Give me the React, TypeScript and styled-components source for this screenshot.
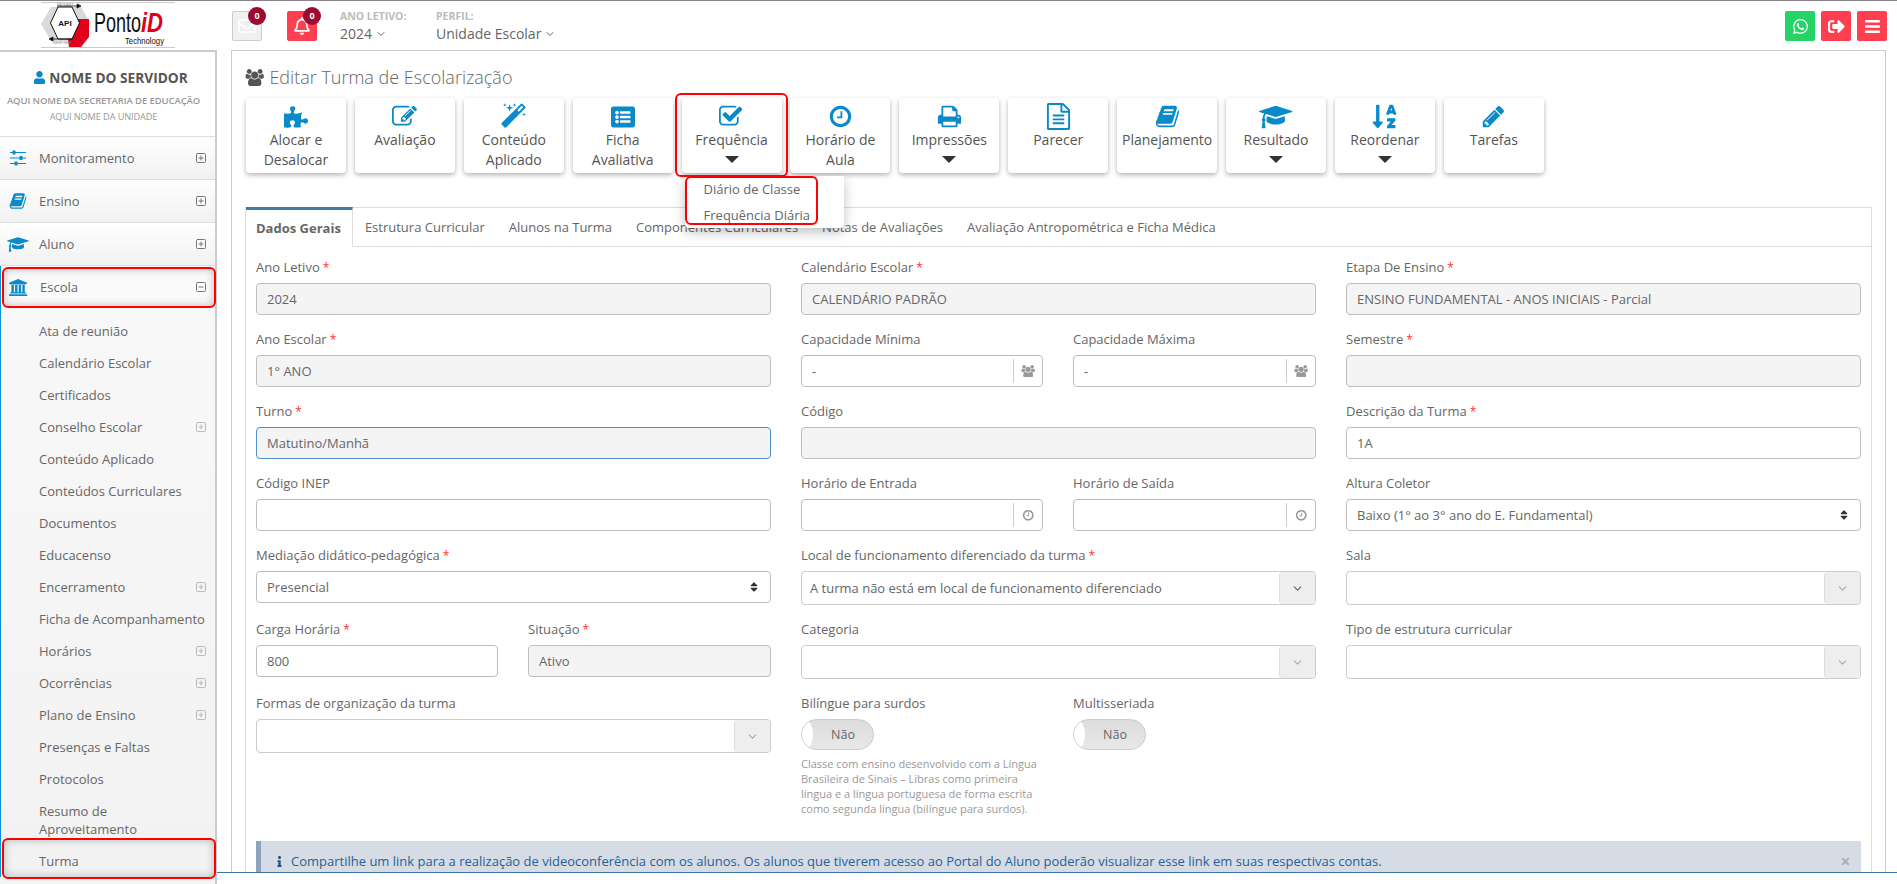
import React from "react";
import styled, { createGlobalStyle } from "styled-components";
import { FaBars, FaInfo, FaListAlt, FaPuzzlePiece, FaRegBell, FaRegEnvelope, FaSignOutAlt, FaSort, FaSortAlphaDown, FaTimes, FaUser, FaWhatsapp } from "react-icons/fa";
import { FiChevronDown } from "react-icons/fi";
import { LuSquareMinus, LuSquarePlus } from "react-icons/lu";

const GlobalStyle = createGlobalStyle`
  html, body {
    margin: 0;
    height: 884px;
    overflow: hidden;
    background: #fff;
    font-family: "Open Sans", "Liberation Sans", sans-serif;
    font-size: 13px;
    color: #666;
  }
  * { box-sizing: border-box; }
`;

const Page = styled.div`
  height: 884px;
  overflow: hidden;
  display: flex;
  flex-direction: column;
  border-top: 1px solid #8a8289;
`;

/* top bar */
const TopBar = styled.header`
  height: 49px;
  flex: none;
  display: flex;
  align-items: flex-start;
  padding: 1px 10px 0 41px;
`;

const LogoBox = styled.div`
  width: 134px;
  height: 46px;
  margin-right: 57px;
  border-top: 1px solid #ccc;
  border-bottom: 1px solid #ccc;
`;

const NoticeButton = styled.div<{ $alert?: boolean }>`
  position: relative;
  width: 30px;
  height: 30px;
  margin: 9px 25px 0 0;
  display: flex;
  align-items: center;
  justify-content: center;
  border-radius: 2px;
  border: 1px solid ${(p) => (p.$alert ? "#ff3f50" : "#ccc")};
  background: ${(p) => (p.$alert ? "#ff3f50" : "#f0f0f0")};
  color: #fff;
  font-size: 18px;
`;

const Badge = styled.span`
  position: absolute;
  top: -5px;
  left: 15px;
  width: 18px;
  height: 18px;
  border-radius: 50%;
  background: #9c0b2f;
  color: #fff;
  font-size: 9px;
  font-weight: 700;
  line-height: 18px;
  text-align: center;
`;

const PeriodGroup = styled.div`
  display: flex;
  margin: 7px 0 0 -2px;
`;

const Period = styled.div<{ $width: number }>`
  width: ${(p) => p.$width}px;
`;

const PeriodLabel = styled.div`
  font-size: 10.5px;
  font-weight: 700;
  line-height: 14px;
  color: #bbb;
`;

const PeriodValue = styled.div`
  display: flex;
  align-items: center;
  gap: 3px;
  font-size: 14px;
  line-height: 22px;
  color: #666;
`;

const ShortcutGroup = styled.div`
  margin: 9px 0 0 auto;
  display: flex;
  gap: 6px;
`;

const Shortcut = styled.div<{ $color: string }>`
  width: 30px;
  height: 30px;
  border-radius: 2px;
  background: ${(p) => p.$color};
  color: #fff;
  font-size: 17px;
  display: flex;
  align-items: center;
  justify-content: center;
`;

const Body = styled.div`
  flex: 1;
  min-height: 0;
  display: flex;
`;

/* sidebar */
const Sidebar = styled.aside`
  width: 217px;
  flex: none;
  border-top: 2px solid #ccc;
  border-right: 2px solid #ccc;
  background: #f5f5f5;
`;

const Profile = styled.div`
  height: 85px;
  background: #fff;
  border-bottom: 1px solid #ddd;
  padding: 16px 8px 0 0;
  text-align: center;
`;

const ProfileName = styled.div`
  margin-left: 14px;
  font-size: 13.7px;
  font-weight: 700;
  line-height: 20px;
  color: #555;
  white-space: nowrap;
  svg { color: #0a8ac8; font-size: 13px; margin-right: 3px; vertical-align: -1px; }
`;

const ProfileLine = styled.div<{ $bold?: boolean }>`
  font-size: ${(p) => (p.$bold ? 9.5 : 9.2)}px;
  font-weight: ${(p) => (p.$bold ? 600 : 400)};
  line-height: 16px;
  margin-top: ${(p) => (p.$bold ? 5 : 0)}px;
  letter-spacing: -0.1px;
  color: #999;
  white-space: nowrap;
`;

const MenuRow = styled.div<{ $open?: boolean }>`
  position: relative;
  height: ${(p) => (p.$open ? 42 : 43)}px;
  display: flex;
  align-items: center;
  background: ${(p) => (p.$open ? "#fafafa" : "linear-gradient(#fff, #f1f1f1)")};
  border-bottom: ${(p) => (p.$open ? "none" : "1px solid #ddd")};
  color: #666;
  ${(p) =>
    p.$open &&
    `&::after {
      content: "";
      position: absolute;
      inset: 1px -1px 0 1px;
      border: 2px solid #f00;
      border-radius: 6px;
      box-shadow: inset 0 0 8px rgba(0, 0, 0, 0.25);
    }`}
`;

const MenuIcon = styled.span<{ $size?: number }>`
  width: 36px;
  margin-right: 3px;
  display: flex;
  justify-content: center;
  color: #0a8ac8;
  font-size: ${(p) => p.$size ?? 18}px;
`;

const MenuLabel = styled.span`
  flex: 1;
`;

const ExpandIcon = styled.span<{ $soft?: boolean }>`
  width: 12px;
  margin-right: 8px;
  display: flex;
  color: ${(p) => (p.$soft ? "#bbb" : "#777")};
  font-size: 12px;
`;

const OpenGroup = styled.div`
  border-left: 1px solid #0a8fd0;
`;

const SubList = styled.div`
  padding-top: 7px;
  background: linear-gradient(#f8f8f8, #f2f2f2);
`;

const SubItem = styled.div<{ $marked?: boolean }>`
  position: relative;
  display: flex;
  align-items: center;
  padding: 7px 0 7px 38px;
  line-height: 18px;
  color: #666;
  ${(p) =>
    p.$marked &&
    `&::after {
      content: "";
      position: absolute;
      inset: -7px -1px -2px 1px;
      border: 2px solid #f00;
      border-radius: 6px;
      box-shadow: inset 0 0 8px rgba(0, 0, 0, 0.25);
    }`}
`;

const SubLabel = styled.span`
  flex: 1;
`;

/* main panel */
const Main = styled.main`
  width: 1655px;
  height: 823px;
  margin-left: 14px;
  overflow: hidden;
  flex: none;
  border: 1px solid #ccc;
  border-bottom: none;
  padding: 14px 13px 0;
`;

const PageTitle = styled.h1`
  margin: 0;
  display: flex;
  align-items: center;
  gap: 5px;
  font-size: 18px;
  font-weight: 300;
  line-height: 24px;
  color: #666;
  svg { color: #555; font-size: 17px; }
`;

const ActionBar = styled.div`
  display: flex;
  gap: 8.9px;
  margin: 9px 0 0 1px;
`;

const ActionButton = styled.div<{ $marked?: boolean }>`
  position: relative;
  width: 100px;
  height: 75px;
  flex: none;
  padding-top: 5px;
  border-radius: 4px;
  background: #fff;
  box-shadow: 0 2px 5px rgba(0, 0, 0, 0.3);
  text-align: center;
  font-size: 14px;
  line-height: 20px;
  color: #555;
  ${(p) => p.$marked && "z-index: 3;"}
  ${(p) =>
    p.$marked &&
    `&::after {
      content: "";
      position: absolute;
      inset: -5px -6px -4px -7px;
      border: 2px solid #f00;
      border-radius: 6px;
      pointer-events: none;
    }`}
`;

const ActionIcon = styled.div<{ $size?: number }>`
  height: 27px;
  display: flex;
  align-items: center;
  justify-content: center;
  color: #0a8ac8;
  font-size: ${(p) => p.$size ?? 25}px;
`;

const Caret = styled.div`
  width: 0;
  height: 0;
  margin: 6px auto 0;
  border-left: 7.5px solid transparent;
  border-right: 7.5px solid transparent;
  border-top: 7.5px solid #333;
`;

const Dropdown = styled.div`
  position: absolute;
  top: 78px;
  left: 3px;
  width: 159px;
  height: 52px;
  background: #fff;
  border-radius: 0 0 4px 4px;
  box-shadow: 0 4px 12px rgba(0, 0, 0, 0.25);
  text-align: left;
`;

const DropdownMark = styled.div`
  width: 133px;
  height: 49px;
  border: 2px solid #f00;
  border-radius: 6px;
  padding: 0 0 0 17px;
`;

const DropdownItem = styled.div`
  height: 26px;
  font-size: 13px;
  line-height: 23px;
  color: #666;
  white-space: nowrap;
`;

const TabBox = styled.section`
  margin-top: 34px;
  border-left: 1px solid #ddd;
  border-right: 1px solid #ddd;
  width: 1627px;
`;

const TabBar = styled.div`
  height: 40px;
  display: flex;
`;

const Tab = styled.div<{ $active?: boolean }>`
  padding: 0 ${(p) => (p.$active ? "11px 0 10px" : "12px")};
  line-height: ${(p) => (p.$active ? 37 : 39)}px;
  white-space: nowrap;
  color: #666;
  font-weight: ${(p) => (p.$active ? 700 : 400)};
  border-top: ${(p) => (p.$active ? "3px solid #3f7fa6" : "1px solid #ddd")};
  border-bottom: ${(p) => (p.$active ? "none" : "1px solid #ddd")};
  border-right: ${(p) => (p.$active ? "1px solid #ddd" : "none")};
`;

const TabFiller = styled.div`
  flex: 1;
  border-top: 1px solid #ddd;
  border-bottom: 1px solid #ddd;
`;

const TabContent = styled.div`
  padding: 9px 10px 0;
`;

const FormGrid = styled.div`
  display: grid;
  grid-template-columns: repeat(3, 515px);
  column-gap: 30px;
  align-items: start;
`;

const SplitCell = styled.div`
  display: grid;
  grid-template-columns: 242px 243px;
  column-gap: 30px;
  align-items: start;
`;

const Field = styled.div`
  margin-bottom: 13px;
`;

const Label = styled.div`
  height: 27px;
  padding-bottom: 5px;
  font-size: 13px;
  line-height: 22px;
  color: #666;
  white-space: nowrap;
`;

const Star = styled.span`
  margin-left: 3px;
  font-size: 12px;
  color: #f33;
`;

const TextBox = styled.div<{ $disabled?: boolean; $focus?: boolean }>`
  height: 32px;
  padding: 0 10px;
  display: flex;
  align-items: center;
  border: 1px solid ${(p) => (p.$focus ? "#4d90cf" : "#bdbdbd")};
  border-radius: 4px;
  background: ${(p) => (p.$disabled ? "#f4f4f4" : "#fff")};
  color: #666;
  white-space: nowrap;
`;

const AddonBox = styled(TextBox)`
  padding: 0 0 0 10px;
`;

const Addon = styled.div`
  margin-left: auto;
  width: 29px;
  height: 24px;
  padding-left: 1px;
  display: flex;
  align-items: center;
  justify-content: center;
  border-left: 1px solid #ccc;
  color: #999;
  font-size: 12.5px;
`;

const NativeSelect = styled(TextBox)`
  justify-content: space-between;
  svg { color: #333; font-size: 12px; }
`;

const SearchSelect = styled.div`
  height: 34px;
  padding-left: 8px;
  display: flex;
  align-items: center;
  border: 1px solid #ccc;
  border-radius: 4px;
  color: #666;
  white-space: nowrap;
`;

const SelectArrow = styled.div<{ $filled?: boolean }>`
  margin-left: auto;
  width: 36px;
  height: 32px;
  display: flex;
  align-items: center;
  justify-content: center;
  border-left: 1px solid #ddd;
  border-radius: 4px;
  background: #eee;
  color: ${(p) => (p.$filled ? "#666" : "#aaa")};
  font-size: 13px;
`;

const Toggle = styled.div`
  position: relative;
  width: 73px;
  height: 31px;
  padding-left: 11px;
  display: flex;
  align-items: center;
  justify-content: center;
  overflow: hidden;
  border: 1px solid #ccc;
  border-radius: 16px;
  background: linear-gradient(#dcdcdc, #e8e8e8);
  color: #666;
  font-size: 12.5px;
  &::before {
    content: "";
    position: absolute;
    top: 0;
    bottom: 0;
    left: -4px;
    width: 15px;
    border-radius: 50%;
    background: #fff;
  }
`;

const HelpText = styled.div`
  margin-top: 6px;
  font-size: 11px;
  line-height: 15px;
  color: #999;
`;

const Alert = styled.div`
  margin-top: 12px;
  width: 1605px;
  height: 44px;
  padding: 8px 0 0 5px;
  display: flex;
  align-items: flex-start;
  border-left: 5px solid #8fa3bd;
  background: #d5dce6;
  color: #2b5f92;
  line-height: 24px;
  white-space: nowrap;
`;

const AlertIcon = styled.span`
  width: 25px;
  padding: 2px 0 0 8px;
  font-size: 11px;
  color: #2b4f75;
`;

const AlertClose = styled.span`
  margin-left: auto;
  margin-right: 10px;
  padding-top: 2px;
  font-size: 11px;
  color: #a8b0ba;
`;

const Footer = styled.footer`
  position: fixed;
  top: 872px;
  left: 217px;
  right: 0;
  height: 12px;
  background: #fff;
  border-top: 1px solid #3a73a8;
`;

// Font Awesome 4 outlines, the react-icons set only carries the redrawn 5 versions
const FaOld = ({ d, width = 1792 }: { d: string; width?: number }) => (
  <svg viewBox={`0 0 ${width} 1792`} width={`${width / 1792}em`} height="1em" fill="currentColor">
    <path d={d} />
  </svg>
);

const CHECK_SQUARE = "M1408 930v318q0 119-84.5 203.5t-203.5 84.5h-832q-119 0-203.5-84.5t-84.5-203.5v-832q0-119 84.5-203.5t203.5-84.5h832q63 0 117 25 15 7 18 23 3 17-9 29l-49 49q-10 10-23 10-3 0-9-2-23-6-45-6h-832q-66 0-113 47t-47 113v832q0 66 47 113t113 47h832q66 0 113-47t47-113v-254q0-13 9-22l64-64q10-10 23-10 6 0 12 3 20 8 20 29zm231-489l-814 814q-24 24-57 24t-57-24l-430-430q-24-24-24-57t24-57l110-110q24-24 57-24t57 24l263 263 647-647q24-24 57-24t57 24l110 110q24 24 24 57t-24 57z";
const PENCIL_SQUARE = "M888 1184l116-116-152-152-116 116v56h96v96h56zm440-720q-16-16-33 1l-350 350q-17 17-1 33t33-1l350-350q17-17 1-33zm80 594v190q0 119-84.5 203.5t-203.5 84.5h-832q-119 0-203.5-84.5t-84.5-203.5v-832q0-119 84.5-203.5t203.5-84.5h832q63 0 117 25 15 7 18 23 3 17-9 29l-49 49q-14 14-32 8-23-6-45-6h-832q-66 0-113 47t-47 113v832q0 66 47 113t113 47h832q66 0 113-47t47-113v-126q0-13 9-22l64-64q15-15 35-7t20 29zm-96-738l288 288-672 672h-288v-288zm444 132l-92 92-288-288 92-92q28-28 68-28t68 28l152 152q28 28 28 68t-28 68z";
const FILE_TEXT = "M1596 380q28 28 48 76t20 88v1152q0 40-28 68t-68 28h-1344q-40 0-68-28t-28-68v-1600q0-40 28-68t68-28h896q40 0 88 20t76 48zm-444-244v376h376q-10-29-22-41l-313-313q-12-12-41-22zm384 1528v-1024h-416q-40 0-68-28t-28-68v-416h-768v1536h1280zm-1024-864q0-14 9-23t23-9h704q14 0 23 9t9 23v64q0 14-9 23t-23 9h-704q-14 0-23-9t-9-23v-64zm736 224q14 0 23 9t9 23v64q0 14-9 23t-23 9h-704q-14 0-23-9t-9-23v-64q0-14 9-23t23-9h704zm0 256q14 0 23 9t9 23v64q0 14-9 23t-23 9h-704q-14 0-23-9t-9-23v-64q0-14 9-23t23-9h704z";
const CLOCK = "M1024 544v448q0 14-9 23t-23 9h-320q-14 0-23-9t-9-23v-64q0-14 9-23t23-9h224v-352q0-14 9-23t23-9h64q14 0 23 9t9 23zm416 352q0-148-73-273t-198-198-273-73-273 73-198 198-73 273 73 273 198 198 273 73 273-73 198-198 73-273zm224 0q0 209-103 385.5t-279.5 279.5-385.5 103-385.5-103-279.5-279.5-103-385.5 103-385.5 279.5-279.5 385.5-103 385.5 103 279.5 279.5 103 385.5z";
const USERS = "M657 896q-162 5-265 128h-134q-82 0-138-40.500t-56-118.500q0-353 124-353 6 0 43.500 21t97.500 42.500 119 21.500q67 0 133-23-5 37-5 66 0 139 81 256zm1071 637q0 120-73 189.500t-194 69.500h-874q-121 0-194-69.500t-73-189.500q0-53 3.500-103.500t14-109 26.500-108.500 43-97.500 62-81 85.500-53.500 111.500-20q10 0 43 21.500t73 48 107 48 135 21.500 135-21.500 107-48 73-48 43-21.500q61 0 111.500 20t85.500 53.500 62 81 43 97.500 26.500 108.500 14 109 3.500 103.500zm-1024-1277q0 106-75 181t-181 75-181-75-75-181 75-181 181-75 181 75 75 181zm704 384q0 159-112.500 271.500t-271.500 112.500-271.500-112.500-112.500-271.500 112.500-271.500 271.500-112.500 271.500 112.500 112.500 271.500zm576 225q0 78-56 118.500t-138 40.500h-134q-103-123-265-128 81-117 81-256 0-29-5-66 66 23 133 23 59 0 119-21.500t97.500-42.500 43.500-21q124 0 124 353zm-128-609q0 106-75 181t-181 75-181-75-75-181 75-181 181-75 181 75 75 181z";
const CAP = "M1774 836l18 316q4 69-82 128t-235 93.500-323 34.500-323-34.500-235-93.500-82-128l18-316 574 181q22 7 48 7t48-7zm530-324q0 23-22 31l-1120 352q-4 1-10 1t-10-1l-652-206q-43 34-71 111.500t-34 178.500q63 36 63 109 0 69-58 107l58 433q2 14-8 25-9 11-24 11h-192q-15 0-24-11-10-11-8-25l58-433q-58-38-58-107 0-73 65-111 11-207 98-330l-333-104q-22-8-22-31t22-31l1120-352q4-1 10-1t10 1l1120 352q22 8 22 31z";
const BOOK = "M1703 478q40 57 18 129l-275 906q-19 64-76.500 107.500t-122.500 43.500h-923q-77 0-148.500-53.500t-99.500-131.500q-24-67-2-127 0-4 3-27t4-37q1-8-3-21.500t-3-19.500q2-11 8-21t16.500-23.500 16.500-23.500q23-38 45-91.500t30-91.500q3-10 .5-30t-.5-28q3-11 17-28t17-23q21-36 42-92t25-90q1-9-2.500-32t.5-28q4-13 22-30.500t22-22.500q19-26 42.500-84.500t27.500-96.500q1-8-3-25.500t-2-26.500q2-8 9-18t18-23 17-21q8-12 16.500-30.500t15-35 16-36 19.500-32 26.500-23.500 36-11.500 47.500 5.500l-1 3q38-9 51-9h761q74 0 114 56t18 130l-274 906q-36 119-71.500 153.500t-128.500 34.500h-869q-27 0-38 15-11 16-1 43 24 70 144 70h923q29 0 56-15.500t35-41.500l300-987q7-22 5-57 38 15 59 43zm-1064 2q-4 13 2 22.500t20 9.500h608q13 0 25.500-9.500t16.500-22.500l21-64q4-13-2-22.500t-20-9.500h-608q-13 0-25.500 9.500t-16.500 22.500zm-83 256q-4 13 2 22.500t20 9.500h608q13 0 25.500-9.500t16.500-22.500l21-64q4-13-2-22.500t-20-9.500h-608q-13 0-25.500 9.500t-16.500 22.500z";
const PRINT = "M448 1536h896v-256h-896v256zm0-640h896v-384h-160q-40 0-68-28t-28-68v-160h-640v640zm1152 64q0-26-19-45t-45-19-45 19-19 45 19 45 45 19 45-19 19-45zm128 0v416q0 13-9.500 22.500t-22.500 9.500h-224v160q0 40-28 68t-68 28h-960q-40 0-68-28t-28-68v-160h-224q-13 0-22.500-9.500t-9.500-22.500v-416q0-79 56.500-135.500t135.500-56.500h64v-544q0-40 28-68t68-28h672q40 0 88 20t76 48l152 152q28 28 48 76t20 88v256h64q79 0 135.500 56.500t56.500 135.500z";
const WAND = "M1254 581l293-293-107-107-293 293zm447-293q0 27-18 45l-1286 1286q-18 18-45 18t-45-18l-198-198q-18-18-18-45t18-45l1286-1286q18-18 45-18t45 18l198 198q18 18 18 45zm-1351-190l98 30-98 30-30 98-30-98-98-30 98-30 30-98zm350 162l196 60-196 60-60 196-60-196-196-60 196-60 60-196zm930 478l98 30-98 30-30 98-30-98-98-30 98-30 30-98zm-640-640l98 30-98 30-30 98-30-98-98-30 98-30 30-98z";
const PENCIL = "M491 1536l91-91-235-235-91 91v107h128v128h107zm523-928q0-22-22-22-10 0-17 7l-542 542q-7 7-7 17 0 22 22 22 10 0 17-7l542-542q7-7 7-17zm-54-192l416 416-832 832h-416v-416zm683 96q0 53-37 90l-166 166-416-416 166-165q36-38 90-38 53 0 91 38l235 234q37 39 37 91z";
const BANK = "M960 0l960 384v128h-128q0 26-20.500 45t-48.500 19h-1526q-28 0-48.500-19t-20.500-45h-128v-128zm-704 640h256v768h128v-768h256v768h128v-768h256v768h128v-768h256v768h59q28 0 48.500 19t20.500 45v64h-1664v-64q0-26 20.500-45t48.500-19h59v-768zm1595 960q28 0 48.500 19t20.500 45v128h-1920v-128q0-26 20.500-45t48.500-19h1782z";

const Logo = () => (
  <svg viewBox="0 0 134 44" width="134" height="44">
    <polygon points="0,21 10,4 40,4 50,21 40,38 10,38" fill="#d9d9d9" />
    <polygon points="26,30 36,16 48,16 48,34 40,44 28,44" fill="#e0001a" />
    <polygon points="9.500,20 17,4 31,4 38.500,20 31,36 17,36" fill="#fff" stroke="#111" strokeWidth="1" />
    <text x="24" y="23" fontFamily="Liberation Sans, sans-serif" fontSize="8" fontWeight="700" textAnchor="middle" fill="#111">API</text>
    <path d="M16 3h20M36 1l4 2-4 2zM12 36h20M12 34l-4 2 4 2z" stroke="#111" strokeWidth="0.8" fill="#111" />
    <text x="16" y="2.500" fontFamily="Liberation Sans, sans-serif" fontSize="3.400" fill="#777">REQUEST</text>
    <text x="12" y="41" fontFamily="Liberation Sans, sans-serif" fontSize="3.400" fill="#777">RESPONSE</text>
    <text x="53" y="29" fontFamily="Liberation Sans, sans-serif" fontSize="28" fill="#111" textLength="47" lengthAdjust="spacingAndGlyphs">Ponto</text>
    <text x="100" y="29" fontFamily="Liberation Sans, sans-serif" fontSize="28" fontWeight="700" fontStyle="italic" fill="#e0001a" textLength="22" lengthAdjust="spacingAndGlyphs">iD</text>
    <text x="84" y="41" fontFamily="Liberation Sans, sans-serif" fontSize="9.500" fill="#111" textLength="39" lengthAdjust="spacingAndGlyphs">Technology</text>
  </svg>
);

const SlidersIcon = () => (
  <svg viewBox="0 0 18 18" width="18" height="18" fill="currentColor">
    <path d="M1 3h16v1H1zM1 8.500h16v1H1zM1 14h16v1H1z" />
    <rect x="3.500" y="1.500" width="3" height="4" rx="0.5" />
    <rect x="10.500" y="7" width="3" height="4" rx="0.5" />
    <rect x="5.500" y="12.500" width="3" height="4" rx="0.5" />
  </svg>
);

const actions: { icon: React.ReactNode; size?: number; label: string[]; caret?: boolean; marked?: boolean }[] = [
  { icon: <FaPuzzlePiece />, size: 24, label: ["Alocar e", "Desalocar"] },
  { icon: <FaOld d={PENCIL_SQUARE} />, label: ["Avaliação"] },
  { icon: <FaOld d={WAND} />, size: 27, label: ["Conteúdo", "Aplicado"] },
  { icon: <FaListAlt />, size: 24, label: ["Ficha", "Avaliativa"] },
  { icon: <FaOld d={CHECK_SQUARE} />, label: ["Frequência"], caret: true, marked: true },
  { icon: <FaOld d={CLOCK} />, label: ["Horário de", "Aula"] },
  { icon: <FaOld d={PRINT} />, label: ["Impressões"], caret: true },
  { icon: <FaOld d={FILE_TEXT} />, size: 27, label: ["Parecer"] },
  { icon: <FaOld d={BOOK} />, label: ["Planejamento"] },
  { icon: <FaOld d={CAP} width={2304} />, size: 26, label: ["Resultado"], caret: true },
  { icon: <FaSortAlphaDown />, size: 27, label: ["Reordenar"], caret: true },
  { icon: <FaOld d={PENCIL} />, label: ["Tarefas"] },
];

const tabs = ["Estrutura Curricular", "Alunos na Turma", "Componentes Curriculares", "Notas de Avaliações", "Avaliação Antropométrica e Ficha Médica"];

const subItems: { label: React.ReactNode; expand?: boolean; marked?: boolean }[] = [
  { label: "Ata de reunião" },
  { label: "Calendário Escolar" },
  { label: "Certificados" },
  { label: "Conselho Escolar", expand: true },
  { label: "Conteúdo Aplicado" },
  { label: "Conteúdos Curriculares" },
  { label: "Documentos" },
  { label: "Educacenso" },
  { label: "Encerramento", expand: true },
  { label: "Ficha de Acompanhamento" },
  { label: "Horários", expand: true },
  { label: "Ocorrências", expand: true },
  { label: "Plano de Ensino", expand: true },
  { label: "Presenças e Faltas" },
  { label: "Protocolos" },
  { label: <>Resumo de<br />Aproveitamento</> },
  { label: "Turma", marked: true },
];

const FieldLabel = ({ text, required }: { text: string; required?: boolean }) => (
  <Label>
    {text}
    {required && <Star>*</Star>}
  </Label>
);

const Input = ({ label, required, value, disabled, focus }: { label: string; required?: boolean; value?: string; disabled?: boolean; focus?: boolean }) => (
  <Field>
    <FieldLabel text={label} required={required} />
    <TextBox $disabled={disabled} $focus={focus}>{value}</TextBox>
  </Field>
);

const AddonInput = ({ label, value, icon }: { label: string; value?: string; icon: React.ReactNode }) => (
  <Field>
    <FieldLabel text={label} />
    <AddonBox>
      {value}
      <Addon>{icon}</Addon>
    </AddonBox>
  </Field>
);

const Select = ({ label, required, value }: { label: string; required?: boolean; value: string }) => (
  <Field>
    <FieldLabel text={label} required={required} />
    <NativeSelect>
      {value}
      <FaSort />
    </NativeSelect>
  </Field>
);

const Search = ({ label, required, value }: { label: string; required?: boolean; value?: string }) => (
  <Field>
    <FieldLabel text={label} required={required} />
    <SearchSelect>
      {value}
      <SelectArrow $filled={!!value}><FiChevronDown /></SelectArrow>
    </SearchSelect>
  </Field>
);

const App = () => (
  <Page>
    <GlobalStyle />
    <TopBar>
      <LogoBox><Logo /></LogoBox>
      <NoticeButton>
        <FaRegEnvelope />
        <Badge>0</Badge>
      </NoticeButton>
      <NoticeButton $alert>
        <FaRegBell />
        <Badge>0</Badge>
      </NoticeButton>
      <PeriodGroup>
        <Period $width={96}>
          <PeriodLabel>ANO LETIVO:</PeriodLabel>
          <PeriodValue>2024 <FiChevronDown size={12} /></PeriodValue>
        </Period>
        <Period $width={160}>
          <PeriodLabel>PERFIL:</PeriodLabel>
          <PeriodValue>Unidade Escolar <FiChevronDown size={12} /></PeriodValue>
        </Period>
      </PeriodGroup>
      <ShortcutGroup>
        <Shortcut $color="#25d366"><FaWhatsapp /></Shortcut>
        <Shortcut $color="#ff3f50"><FaSignOutAlt /></Shortcut>
        <Shortcut $color="#ff3f50"><FaBars /></Shortcut>
      </ShortcutGroup>
    </TopBar>
    <Body>
      <Sidebar>
        <Profile>
          <ProfileName><FaUser />NOME DO SERVIDOR</ProfileName>
          <ProfileLine $bold>AQUI NOME DA SECRETARIA DE EDUCAÇÃO</ProfileLine>
          <ProfileLine>AQUI NOME DA UNIDADE</ProfileLine>
        </Profile>
        <MenuRow>
          <MenuIcon><SlidersIcon /></MenuIcon>
          <MenuLabel>Monitoramento</MenuLabel>
          <ExpandIcon><LuSquarePlus /></ExpandIcon>
        </MenuRow>
        <MenuRow>
          <MenuIcon><FaOld d={BOOK} /></MenuIcon>
          <MenuLabel>Ensino</MenuLabel>
          <ExpandIcon><LuSquarePlus /></ExpandIcon>
        </MenuRow>
        <MenuRow>
          <MenuIcon $size={17}><FaOld d={CAP} width={2304} /></MenuIcon>
          <MenuLabel>Aluno</MenuLabel>
          <ExpandIcon><LuSquarePlus /></ExpandIcon>
        </MenuRow>
        <OpenGroup>
          <MenuRow $open>
            <MenuIcon $size={17}><FaOld d={BANK} width={2048} /></MenuIcon>
            <MenuLabel>Escola</MenuLabel>
            <ExpandIcon><LuSquareMinus /></ExpandIcon>
          </MenuRow>
          <SubList>
            {subItems.map((item, idx) => (
              <SubItem key={`sub-item-${idx}`} $marked={item.marked}>
                <SubLabel>{item.label}</SubLabel>
                {item.expand && <ExpandIcon $soft><LuSquarePlus /></ExpandIcon>}
              </SubItem>
            ))}
          </SubList>
        </OpenGroup>
      </Sidebar>
      <Main>
        <PageTitle><FaOld d={USERS} width={2048} />Editar Turma de Escolarização</PageTitle>
        <ActionBar>
          {actions.map((action, idx) => (
            <ActionButton key={`action-${idx}`} $marked={action.marked}>
              <ActionIcon $size={action.size}>{action.icon}</ActionIcon>
              {action.label.map((line) => <div key={line}>{line}</div>)}
              {action.caret && <Caret />}
              {action.marked && (
                <Dropdown>
                  <DropdownMark>
                    <DropdownItem>Diário de Classe</DropdownItem>
                    <DropdownItem>Frequência Diária</DropdownItem>
                  </DropdownMark>
                </Dropdown>
              )}
            </ActionButton>
          ))}
        </ActionBar>
        <TabBox>
          <TabBar>
            <Tab $active>Dados Gerais</Tab>
            {tabs.map((tab) => <Tab key={tab}>{tab}</Tab>)}
            <TabFiller />
          </TabBar>
          <TabContent>
            <FormGrid>
              <Input label="Ano Letivo" required value="2024" disabled />
              <Input label="Calendário Escolar" required value="CALENDÁRIO PADRÃO" disabled />
              <Input label="Etapa De Ensino" required value="ENSINO FUNDAMENTAL - ANOS INICIAIS - Parcial" disabled />

              <Input label="Ano Escolar" required value="1° ANO" disabled />
              <SplitCell>
                <AddonInput label="Capacidade Mínima" value="-" icon={<FaOld d={USERS} width={2048} />} />
                <AddonInput label="Capacidade Máxima" value="-" icon={<FaOld d={USERS} width={2048} />} />
              </SplitCell>
              <Input label="Semestre" required disabled />

              <Input label="Turno" required value="Matutino/Manhã" disabled focus />
              <Input label="Código" disabled />
              <Input label="Descrição da Turma" required value="1A" />

              <Input label="Código INEP" />
              <SplitCell>
                <AddonInput label="Horário de Entrada" icon={<FaOld d={CLOCK} />} />
                <AddonInput label="Horário de Saída" icon={<FaOld d={CLOCK} />} />
              </SplitCell>
              <Select label="Altura Coletor" value="Baixo (1° ao 3° ano do E. Fundamental)" />

              <Select label="Mediação didático-pedagógica" required value="Presencial" />
              <Search label="Local de funcionamento diferenciado da turma" required value="A turma não está em local de funcionamento diferenciado" />
              <Search label="Sala" />

              <SplitCell>
                <Input label="Carga Horária" required value="800" />
                <Input label="Situação" required value="Ativo" disabled />
              </SplitCell>
              <Search label="Categoria" />
              <Search label="Tipo de estrutura curricular" />

              <Search label="Formas de organização da turma" />
              <SplitCell>
                <Field>
                  <FieldLabel text="Bilíngue para surdos" />
                  <Toggle>Não</Toggle>
                  <HelpText>
                    Classe com ensino desenvolvido com a Língua Brasileira de Sinais – Libras como primeira língua e a língua portuguesa de forma escrita como segunda língua (bilíngue para surdos).
                  </HelpText>
                </Field>
                <Field>
                  <FieldLabel text="Multisseriada" />
                  <Toggle>Não</Toggle>
                </Field>
              </SplitCell>
            </FormGrid>
            <Alert>
              <AlertIcon><FaInfo /></AlertIcon>
              Compartilhe um link para a realização de videoconferência com os alunos. Os alunos que tiverem acesso ao Portal do Aluno poderão visualizar esse link em suas respectivas contas.
              <AlertClose><FaTimes /></AlertClose>
            </Alert>
          </TabContent>
        </TabBox>
      </Main>
    </Body>
    <Footer />
  </Page>
);

export default App;
